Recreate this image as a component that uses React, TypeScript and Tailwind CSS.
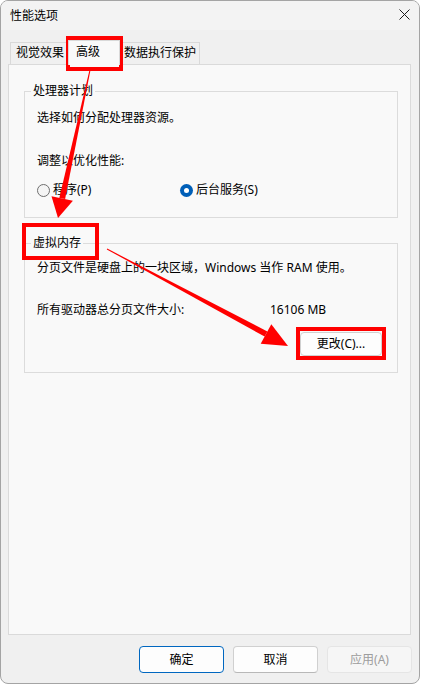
import React from 'react';

const font = { fontFamily: '"Noto Sans", "Noto Sans CJK SC", sans-serif' };

function Radio({ checked, label }: { checked?: boolean; label: string }) {
  return (
    <div className="flex items-center h-[16px]">
      {checked ? (
        <span className="w-[13px] h-[13px] rounded-full bg-[#005fb8] flex items-center justify-center">
          <span className="w-[5px] h-[5px] rounded-full bg-white" />
        </span>
      ) : (
        <span className="w-[13px] h-[13px] rounded-full border border-[#6f6f6f] bg-[#f5f5f5]" />
      )}
      <span className="ml-[3px]">{label}</span>
    </div>
  );
}

function Group({ title, children, className = '' }: { title: string; children: React.ReactNode; className?: string }) {
  return (
    <fieldset className={`w-[374px] border border-[#dcdcdc] ${className}`}>
      <legend className="ml-[6px] px-[2px] leading-[16px]">{title}</legend>
      {children}
    </fieldset>
  );
}

export default function App() {
  return (
    <div className="relative w-[421px] h-[685px] bg-white text-[12px] text-black" style={font}>
      <div className="w-[420px] h-[684px] border border-[#a4a4a4] rounded-[8px] bg-[#f0f0f0] overflow-hidden flex flex-col">
        {/* title bar */}
        <div className="h-[29px] flex items-center justify-between pl-[9px] pr-[9px] bg-[#f3f3f3]">
          <span className="leading-[16px]">性能选项</span>
          <svg width="11" height="11" viewBox="0 0 11 11" className="-mt-[2px]">
            <path d="M0.5 0.5L10.5 10.5M10.5 0.5L0.5 10.5" stroke="#1a1a1a" strokeWidth="1" />
          </svg>
        </div>

        <div className="flex-1 flex flex-col pl-[7px] pr-[8px] pt-[10px]">
          {/* tabs */}
          <div className="h-[24px] flex items-end pl-[2px]">
            <div className="h-[22px] w-[58px] border border-b-0 border-[#d9d9d9] bg-[#f0f0f0] pl-[5px] leading-[20px]">视觉效果</div>
            <div className="relative z-10 -mb-px h-[25px] w-[52px] border border-b-0 border-[#d9d9d9] bg-[#f9f9f9] pl-[7px] pt-[3px] leading-[16px]">高级</div>
            <div className="h-[22px] w-[80px] border border-b-0 border-[#d9d9d9] bg-[#f0f0f0] pl-[3px] leading-[20px]">数据执行保护</div>
          </div>

          {/* panel */}
          <div className="h-[571px] border border-[#dadada] bg-[#f9f9f9] pl-[15px] pt-[18px]">
            <Group title="处理器计划">
              <div className="pl-[12px] pb-[19px] leading-[16px]">
                <div className="mt-[11px]">选择如何分配处理器资源。</div>
                <div className="mt-[27px]">调整以优化性能:</div>
                <div className="mt-[13px] flex">
                  <div className="w-[143px]">
                    <Radio label="程序(P)" />
                  </div>
                  <Radio checked label="后台服务(S)" />
                </div>
              </div>
            </Group>

            <Group title="虚拟内存" className="mt-[17px]">
              <div className="pl-[12px] pr-[15px] pb-[16px] leading-[16px]">
                <div className="mt-[9px]">分页文件是硬盘上的一块区域，Windows 当作 RAM 使用。</div>
                <div className="mt-[26px] flex">
                  <span className="w-[233px]">所有驱动器总分页文件大小:</span>
                  <span>16106 MB</span>
                </div>
                <div className="mt-[14px] flex justify-end">
                  <button className="w-[82px] h-[24px] bg-[#fdfdfd] border border-[#d0d0d0] rounded-[4px]">更改(C)...</button>
                </div>
              </div>
            </Group>
          </div>

          {/* bottom buttons */}
          <div className="mt-[11px] -mr-px flex justify-end gap-[9px]">
            <button className="w-[85px] h-[27px] rounded-[4px] border border-[#0067c0] bg-[#fdfdfd]">确定</button>
            <button className="w-[85px] h-[27px] rounded-[4px] border border-[#d0d0d0] border-b-[#b8b8b8] bg-[#fdfdfd]">取消</button>
            <button className="w-[85px] h-[27px] rounded-[4px] border border-[#e5e5e5] bg-[#f6f6f6] text-[#9d9d9d]">应用(A)</button>
          </div>
        </div>
      </div>

      {/* annotations */}
      <div className="absolute left-[66px] top-[36px] w-[57px] h-[35px] border-[4px] border-[#ff0000]" />
      <div className="absolute left-[22px] top-[223px] w-[77px] h-[37px] border-[4px] border-[#ff0000]" />
      <div className="absolute left-[296px] top-[327px] w-[90px] h-[33px] border-[4px] border-[#ff0000]" />
      <svg className="absolute left-0 top-0 pointer-events-none" width="421" height="685" viewBox="0 0 421 685">
        <polygon points="89.5,70 90.5,70 65.1,199.1 59.3,197.9" fill="#ff0000" />
        <polygon points="51.5,196.2 72.9,200.8 58,218" fill="#ff0000" />
        <polygon points="107.2,248.6 106.8,249.4 264.6,336.6 267.4,331.4" fill="#ff0000" />
        <polygon points="271.3,324.3 260.7,343.7 288,346" fill="#ff0000" />
      </svg>
    </div>
  );
}
